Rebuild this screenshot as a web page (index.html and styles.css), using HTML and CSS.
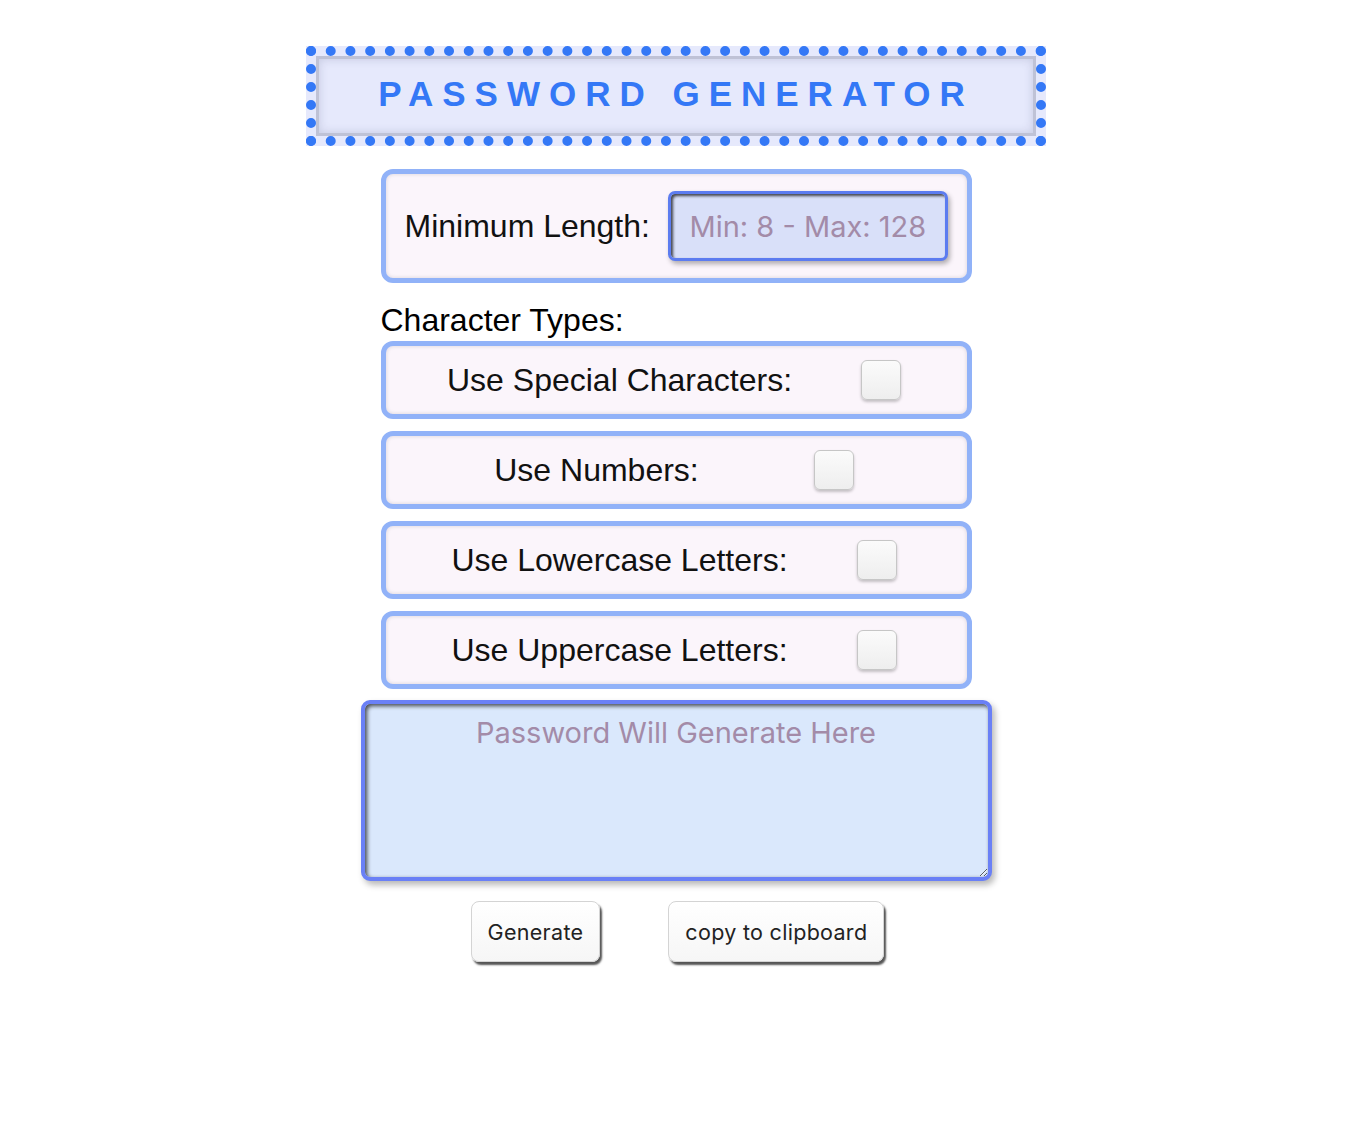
FILE: index.html
```html
<!DOCTYPE html>
<html lang="en">
<head>
<meta charset="utf-8">
<title>Password Generator</title>
<link rel="stylesheet" href="styles.css">
</head>
<body>
<div class="page">
  <h1 class="title">PASSWORD GENERATOR</h1>
  <form class="form">
    <div class="card length">
      <label class="label" for="len">Minimum Length:</label>
      <input class="len-input" id="len" type="text" placeholder="Min: 8 - Max: 128">
    </div>
    <div class="section-label">Character Types:</div>
    <div class="card option">
      <label class="label" for="special">Use Special Characters:</label>
      <input class="check" id="special" type="checkbox">
    </div>
    <div class="card option option-wide">
      <label class="label" for="numbers">Use Numbers:</label>
      <input class="check" id="numbers" type="checkbox">
    </div>
    <div class="card option">
      <label class="label" for="lower">Use Lowercase Letters:</label>
      <input class="check" id="lower" type="checkbox">
    </div>
    <div class="card option">
      <label class="label" for="upper">Use Uppercase Letters:</label>
      <input class="check" id="upper" type="checkbox">
    </div>
    <textarea class="output" placeholder="Password Will Generate Here"></textarea>
    <div class="actions">
      <button class="btn" type="button">Generate</button>
      <button class="btn" type="button">copy to clipboard</button>
    </div>
  </form>
</div>
</body>
</html>
```
FILE: styles.css
```css
* { box-sizing: border-box; }

body {
  margin: 0;
  background: #ffffff;
  font-family: "Liberation Sans", Arial, sans-serif;
  color: #111111;
}

.page {
  width: 750px;
  margin: 0 auto;
  padding: 46px 10px 40px 0;
}

.title {
  margin: 0;
  height: 100px;
  border: 10px dotted #3478f6;
  background: #e6e9fc;
  box-shadow: inset 0 0 0 3px #bfc2d6, inset 0 0 8px 4px rgba(80, 85, 120, 0.18);
  color: #3478f6;
  font-size: 35px;
  font-weight: 700;
  letter-spacing: 9px;
  line-height: 76px;
  text-align: center;
  white-space: nowrap;
}

.form {
  width: 591px;
  margin: 23px auto 0;
  display: flex;
  flex-direction: column;
}

.card {
  border: 5px solid #91b2f8;
  border-radius: 12px;
  background: #fbf5fb;
  box-shadow: inset 0 0 4px rgba(0, 0, 0, 0.14);
  display: flex;
  align-items: center;
}

.label {
  font-size: 32px;
  color: #111111;
}

.length {
  height: 114px;
  padding: 0 19px;
  justify-content: space-between;
}

.len-input {
  width: 280px;
  height: 70px;
  border: 3px solid #5c7cf0;
  border-radius: 7px;
  background: #d9e0f9;
  box-shadow: inset 2px 2px 3px rgba(0, 0, 0, 0.7), 2px 3px 5px rgba(0, 0, 0, 0.3);
  padding: 0 0 0 19px;
  font-family: Inter, "Liberation Sans", sans-serif;
  font-size: 29px;
  color: #333;
  outline: none;
}

.len-input::placeholder,
.output::placeholder {
  color: #a38ba8;
}

.section-label {
  margin-top: 19px;
  font-size: 32px;
  line-height: 37px;
  color: #000;
}

.option {
  height: 78px;
  margin-top: 12px;
  justify-content: center;
  gap: 69px;
}

.section-label + .option { margin-top: 2px; }

.option-wide { gap: 115px; }

.check {
  appearance: none;
  -webkit-appearance: none;
  margin: 0 4px 0 0;
  width: 40px;
  height: 40px;
  border: 1.5px solid #c6c6c6;
  border-radius: 6px;
  background: linear-gradient(#fbfbfb, #eeeeee);
  box-shadow: 0 2px 3px rgba(0, 0, 0, 0.22);
}

.output {
  display: block;
  margin: 11px -20px 0;
  width: 631px;
  height: 181px;
  border: 4px solid #6a80f6;
  border-radius: 9px;
  background: #dae8fc;
  box-shadow: inset 2px 2px 4px rgba(0, 0, 0, 0.7), 3px 4px 6px rgba(0, 0, 0, 0.28);
  padding: 11px;
  text-align: center;
  font-family: Inter, "Liberation Sans", sans-serif;
  font-size: 29px;
  color: #333;
  outline: none;
}

.actions {
  margin-top: 20px;
  display: flex;
  justify-content: center;
  gap: 68px;
  padding-left: 3px;
}

.btn {
  height: 61px;
  padding: 0 16px;
  border: 1px solid #d4d4d4;
  border-radius: 8px;
  background: linear-gradient(#ffffff, #f6f6f6);
  box-shadow: 2px 3px 2px #555555;
  font-family: Inter, "Liberation Sans", sans-serif;
  font-size: 21.5px;
  letter-spacing: 0.3px;
  color: #222222;
}
```
